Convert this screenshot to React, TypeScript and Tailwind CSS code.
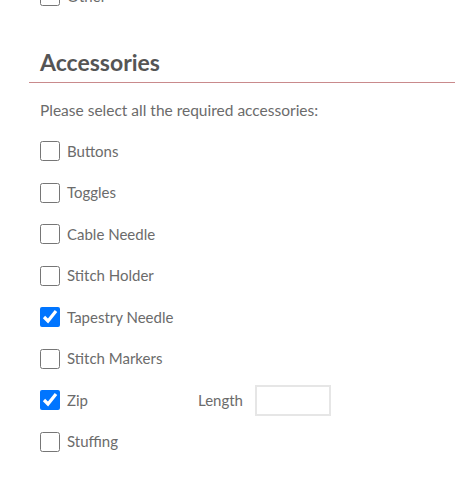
import React from "react";

const items = [
  { label: "Buttons", checked: false },
  { label: "Toggles", checked: false },
  { label: "Cable Needle", checked: false },
  { label: "Stitch Holder", checked: false },
  { label: "Tapestry Needle", checked: true },
  { label: "Stitch Markers", checked: false },
  { label: "Zip", checked: true, length: true },
  { label: "Stuffing", checked: false },
];

function Box({ checked }: { checked: boolean }) {
  return (
    <input
      type="checkbox"
      defaultChecked={checked}
      className="m-0 h-[20px] w-[20px] shrink-0 accent-[#0075ff]"
    />
  );
}

export default function App() {
  return (
    <div
      className="h-[489px] w-[455px] overflow-hidden bg-white text-[#6b6b6b]"
      style={{ fontFamily: "Lato, 'Open Sans', sans-serif" }}
    >
      <div className="-mt-[14px] pl-[40px]">
        <label className="flex h-[20px] items-center gap-[7px] text-[15px]">
          <Box checked={false} />
          <span>Other</span>
        </label>
      </div>

      <div className="ml-[29px] mt-[41px] border-b border-[#c98a8c] pb-[5px] pl-[11px]">
        <h2 className="text-[23px] font-bold leading-[30px] text-[#555]">Accessories</h2>
      </div>

      <p className="mt-[17px] pl-[40px] text-[15.5px] leading-[20px]">
        Please select all the required accessories:
      </p>

      <div className="mt-[21px] flex flex-col gap-[21.5px] pl-[40px]">
        {items.map((it) => (
          <div key={it.label} className="flex h-[20px] items-center text-[15px]">
            <label className="flex w-[158px] items-center">
              <Box checked={it.checked} />
              <span className="ml-[7px]">{it.label}</span>
            </label>
            {it.length && (
              <span className="flex items-center">
                <span>Length</span>
                <span className="ml-[12px] block h-[31px] w-[76px] border-2 border-[#e6e6e6]" />
              </span>
            )}
          </div>
        ))}
      </div>
    </div>
  );
}
